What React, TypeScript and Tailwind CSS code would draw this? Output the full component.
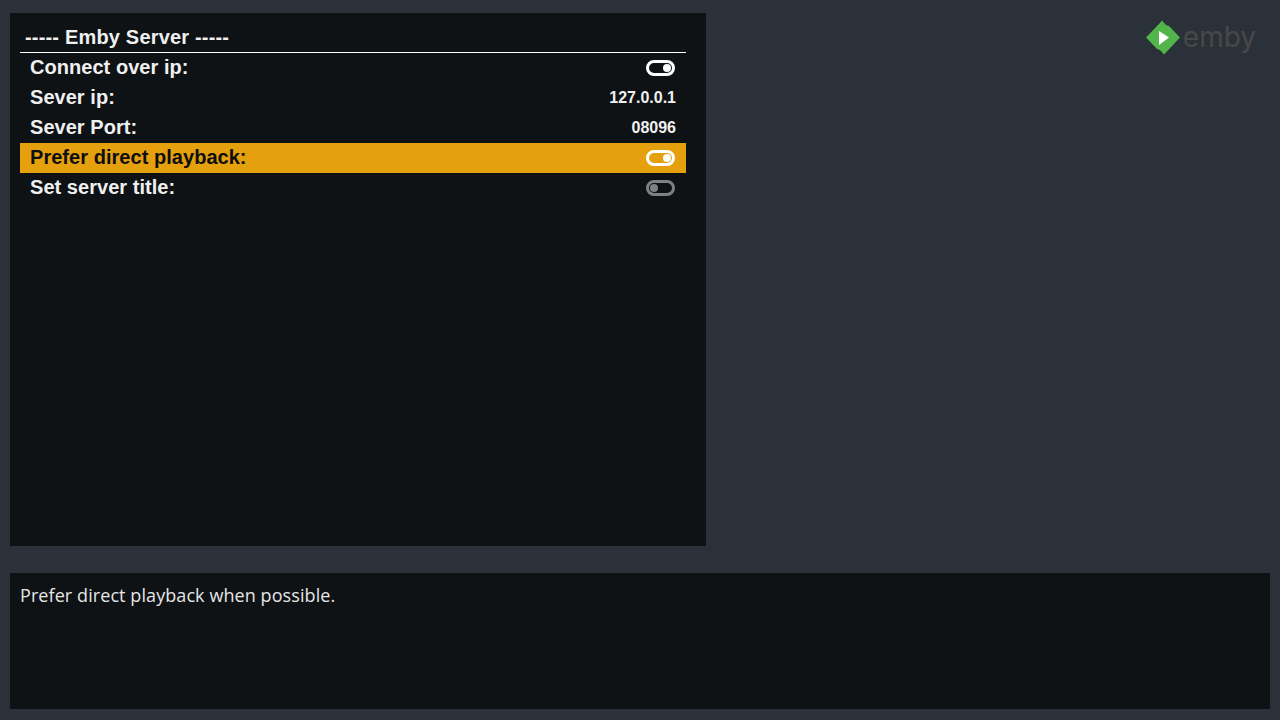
import clsx from "clsx";

function Toggle({ on }: { on: boolean }) {
  return (
    <span
      className={clsx(
        "flex h-[16px] w-[29px] items-center rounded-full border-[3px]",
        on ? "justify-end border-white" : "justify-start border-[#808080]"
      )}
    >
      <span className={clsx("mx-[1px] h-[8px] w-[8px] rounded-full", on ? "bg-white" : "bg-[#808080]")} />
    </span>
  );
}

function EmbyLogo() {
  return (
    <div className="flex items-center gap-[3px]">
      <svg width="34" height="35" viewBox="0 0 34 35">
        <path d="M16 0.5 L20 5 L23 6 L34 17.5 L18 34.5 L14 30 L11 29 L0 17.5 L11 6 L13 4 Z" fill="#52b54b" />
        <path d="M13 11 L23 17.5 L13 25 Z" fill="#ffffff" />
      </svg>
      <span className="font-['Inter'] text-[28px] leading-[35px] text-[#484848]">emby</span>
    </div>
  );
}

const rows = [
  { label: "Connect over ip:", toggle: true },
  { label: "Sever ip:", value: "127.0.0.1" },
  { label: "Sever Port:", value: "08096" },
  { label: "Prefer direct playback:", toggle: true, active: true },
  { label: "Set server title:", toggle: false },
];

export default function App() {
  return (
    <div className="flex h-[720px] w-[1280px] flex-col bg-[#2b3138] px-[10px] pt-[13px] font-['Liberation_Sans',sans-serif]">
      <div className="flex h-[533px] items-start justify-between">
        <section className="h-full w-[696px] bg-[#0e1215] pt-[9px] pr-[20px] pl-[10px]">
          <h1 className="h-[31px] border-b border-white pl-[5px] text-[20px] leading-[30px] font-bold tracking-[0.18px] text-[#f0f0f0]">
            ----- Emby Server -----
          </h1>
          <ul>
            {rows.map((row) => (
              <li
                key={row.label}
                className={clsx(
                  "flex h-[30px] items-center justify-between px-[10px] text-[20px] font-bold",
                  row.active ? "bg-[#e5a00d] text-[#0e0e0e]" : "text-[#f0f0f0]"
                )}
              >
                <span className="mt-[-2px] tracking-[0.04px]">{row.label}</span>
                {row.value ? (
                  <span className="text-[16px] text-[#f0f0f0]">{row.value}</span>
                ) : (
                  <span className="mr-[1px]">
                    <Toggle on={!!row.toggle} />
                  </span>
                )}
              </li>
            ))}
          </ul>
        </section>
        <div className="mt-[7px] mr-[14px]">
          <EmbyLogo />
        </div>
      </div>
      <footer className="mt-[27px] h-[136px] bg-[#0e1215] px-[10px] py-[8px] font-['Open_Sans',sans-serif] text-[18px] leading-[28px] tracking-[0.08px] text-[#e6e6e6]">
        Prefer direct playback when possible.
      </footer>
    </div>
  );
}
